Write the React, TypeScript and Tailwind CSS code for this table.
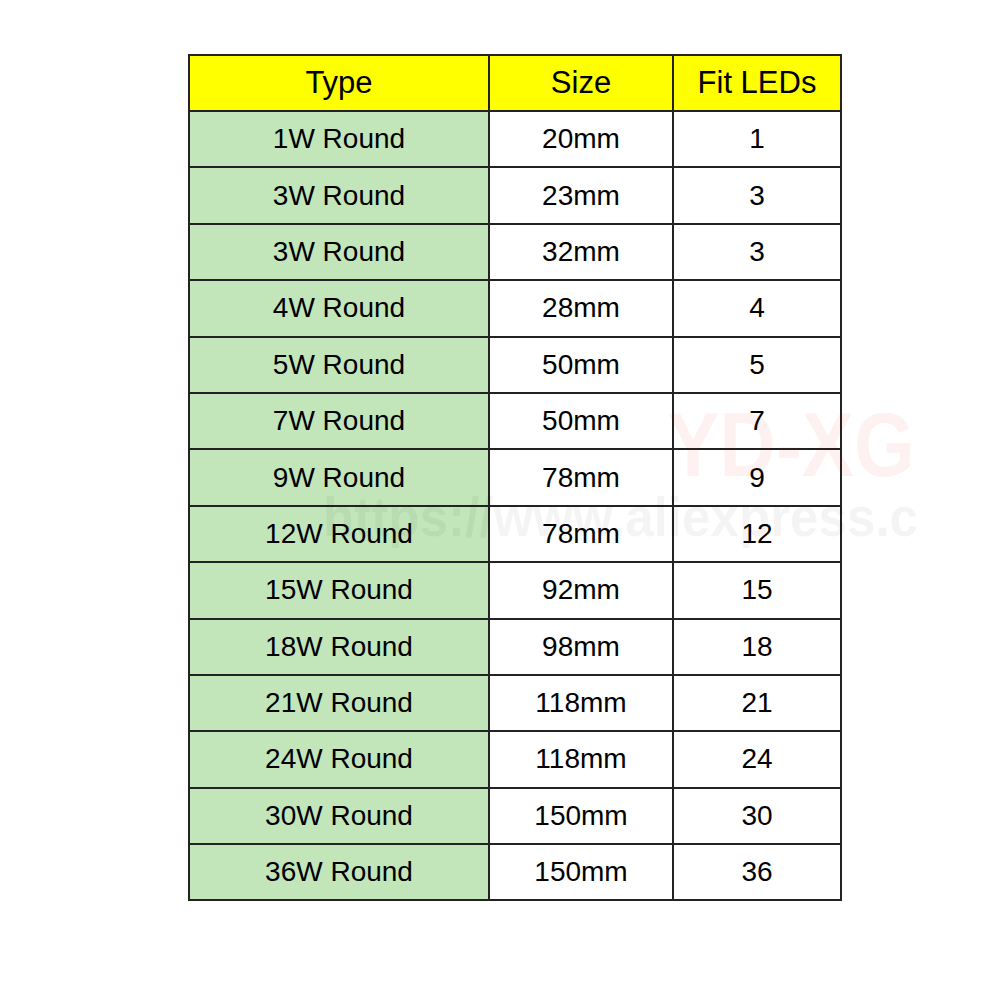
import React from 'react';

const rows: [string, string, string][] = [
  ['1W Round', '20mm', '1'],
  ['3W Round', '23mm', '3'],
  ['3W Round', '32mm', '3'],
  ['4W Round', '28mm', '4'],
  ['5W Round', '50mm', '5'],
  ['7W Round', '50mm', '7'],
  ['9W Round', '78mm', '9'],
  ['12W Round', '78mm', '12'],
  ['15W Round', '92mm', '15'],
  ['18W Round', '98mm', '18'],
  ['21W Round', '118mm', '21'],
  ['24W Round', '118mm', '24'],
  ['30W Round', '150mm', '30'],
  ['36W Round', '150mm', '36'],
];

export default function App() {
  return (
    <div
      className="relative w-[1000px] h-[1000px] bg-white overflow-hidden pt-[54px] pl-[188px]"
      style={{ fontFamily: '"Liberation Sans", Arial, sans-serif' }}
    >
      {/* table */}
      <div className="w-[654px] border-2 border-[#222] text-black">
        <div className="flex h-[54px] bg-[#ffff00] text-[31px]">
          <div className="w-[298px] flex items-center justify-center">Type</div>
          <div className="w-[184px] flex items-center justify-center border-l-2 border-[#222]">Size</div>
          <div className="flex-1 flex items-center justify-center border-l-2 border-[#222]">Fit LEDs</div>
        </div>
        {rows.map(([type, size, leds], i) => (
          <div key={i} className="flex h-[56.4px] border-t-2 border-[#222] text-[28px]">
            <div className="w-[298px] flex items-center justify-center bg-[#c2e5ba]">{type}</div>
            <div className="w-[184px] flex items-center justify-center border-l-2 border-[#222]">{size}</div>
            <div className="flex-1 flex items-center justify-center border-l-2 border-[#222]">{leds}</div>
          </div>
        ))}
      </div>

      {/* watermark */}
      <div className="absolute left-0 top-0 w-[916px] h-[1000px] overflow-hidden pointer-events-none">
        <div className="absolute left-[667px] top-[400px] whitespace-nowrap font-bold text-[90px] leading-none origin-left scale-x-87 text-[rgba(225,0,0,0.055)]">
          YD-XG
        </div>
        <div className="absolute left-[323px] top-[490px] whitespace-nowrap font-bold text-[55px] leading-none origin-left scale-x-93 text-[rgba(0,0,0,0.045)]">
          https://www.aliexpress.com
        </div>
      </div>
    </div>
  );
}
